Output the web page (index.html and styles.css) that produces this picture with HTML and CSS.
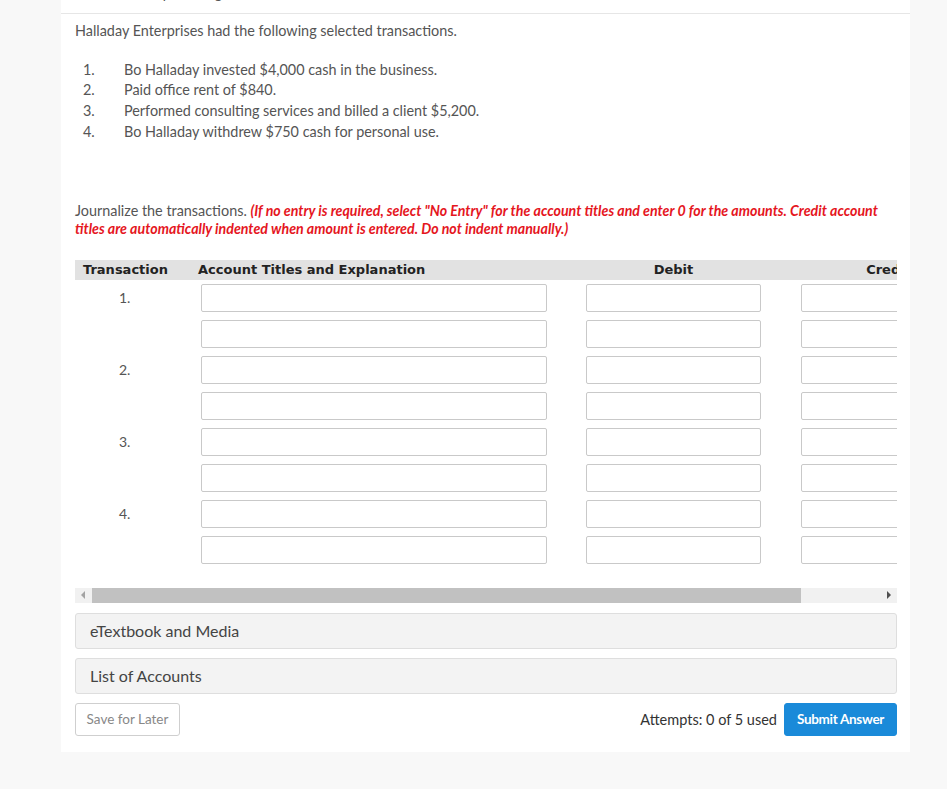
FILE: index.html
```html
<!DOCTYPE html>
<html lang="en">
<head>
<meta charset="utf-8">
<title>Journalize the transactions</title>
<link rel="stylesheet" href="styles.css">
</head>
<body>
<div class="page">
  <div class="card">
    <div class="card-head">Current Attempt in Progress</div>
    <div class="card-body">
      <p class="intro">Halladay Enterprises had the following selected transactions.</p>
      <ol class="txn-list">
        <li><span class="txn-num">1.</span><span>Bo Halladay invested $4,000 cash in the business.</span></li>
        <li><span class="txn-num">2.</span><span>Paid office rent of $840.</span></li>
        <li><span class="txn-num">3.</span><span>Performed consulting services and billed a client $5,200.</span></li>
        <li><span class="txn-num">4.</span><span>Bo Halladay withdrew $750 cash for personal use.</span></li>
      </ol>
      <p class="instructions">Journalize the transactions. <em class="warn">(If no entry is required, select "No Entry" for the account titles and enter 0 for the amounts. Credit account titles are automatically indented when amount is entered. Do not indent manually.)</em></p>

      <div class="journal">
        <div class="journal-scroll">
          <div class="jhead">
            <div class="jh jh-txn">Transaction</div>
            <div class="jh jh-acct">Account Titles and Explanation</div>
            <div class="jh jh-amt">Debit</div>
            <div class="jh jh-amt">Credit</div>
          </div>
          <div class="jrows">
            <div class="jrow"><div class="jnum">1.</div><input class="field field-acct" type="text"><input class="field field-amt" type="text"><input class="field field-amt" type="text"></div>
            <div class="jrow"><div class="jnum"></div><input class="field field-acct" type="text"><input class="field field-amt" type="text"><input class="field field-amt" type="text"></div>
            <div class="jrow"><div class="jnum">2.</div><input class="field field-acct" type="text"><input class="field field-amt" type="text"><input class="field field-amt" type="text"></div>
            <div class="jrow"><div class="jnum"></div><input class="field field-acct" type="text"><input class="field field-amt" type="text"><input class="field field-amt" type="text"></div>
            <div class="jrow"><div class="jnum">3.</div><input class="field field-acct" type="text"><input class="field field-amt" type="text"><input class="field field-amt" type="text"></div>
            <div class="jrow"><div class="jnum"></div><input class="field field-acct" type="text"><input class="field field-amt" type="text"><input class="field field-amt" type="text"></div>
            <div class="jrow"><div class="jnum">4.</div><input class="field field-acct" type="text"><input class="field field-amt" type="text"><input class="field field-amt" type="text"></div>
            <div class="jrow"><div class="jnum"></div><input class="field field-acct" type="text"><input class="field field-amt" type="text"><input class="field field-amt" type="text"></div>
          </div>
        </div>
        <div class="hscroll">
          <div class="hs-btn"><span class="tri tri-left"></span></div>
          <div class="hs-thumb"></div>
          <div class="hs-track"></div>
          <div class="hs-btn"><span class="tri tri-right"></span></div>
        </div>
      </div>

      <div class="panel">eTextbook and Media</div>
      <div class="panel">List of Accounts</div>

      <div class="actions">
        <button class="btn btn-save" type="button">Save for Later</button>
        <div class="actions-right">
          <span class="attempts">Attempts: 0 of 5 used</span>
          <button class="btn btn-submit" type="button">Submit Answer</button>
        </div>
      </div>
    </div>
  </div>
</div>
</body>
</html>
```

FILE: styles.css
```css
* { box-sizing: border-box; }

body {
  margin: 0;
  background: #f8f8f8;
  font-family: Lato, "Liberation Sans", sans-serif;
  color: #555;
}

.page {
  display: flex;
  padding: 0 37px 0 61px;
}

.card {
  flex: 1;
  min-width: 0;
  background: #fff;
  margin-top: -15px;
  padding-bottom: 16px;
}

.card-head {
  font-size: 14px;
  line-height: 17px;
  padding: 0 14px 11px;
  border-bottom: 1px solid #e6e6e6;
  color: #555;
}

.card-body {
  padding: 8px 13px 0 14px;
}

.intro {
  margin: 0;
  font-size: 14.4px;
  line-height: 18px;
}

.txn-list {
  list-style: none;
  margin: 19.5px 0 0;
  padding: 0;
  font-size: 14.4px;
  line-height: 20.7px;
}

.txn-list li {
  display: flex;
}

.txn-num {
  width: 49px;
  padding-left: 8px;
  flex: none;
}

.instructions {
  margin: 59.5px 0 0;
  font-size: 14.4px;
  line-height: 18px;
}

.warn {
  color: #e5161e;
  font-weight: 700;
  font-style: italic;
  font-size: 14.2px;
}

.journal {
  margin-top: 22px;
}

.journal-scroll {
  overflow: hidden;
  padding-bottom: 24px;
}

.jhead,
.jrow {
  display: grid;
  grid-template-columns: 126px 385px 215px 215px;
  width: 941px;
}

.jhead {
  height: 20px;
  background: #e2e2e2;
  align-items: center;
  font-family: "DejaVu Sans", Verdana, sans-serif;
  font-weight: 700;
  font-size: 13px;
  color: #222;
}

.jh-txn { padding-left: 8px; }
.jh-acct { margin-left: -3px; }
.jh-amt { width: 175px; text-align: center; }

.jrows {
  display: flex;
  flex-direction: column;
  gap: 8px;
  padding-top: 4px;
}

.jrow {
  height: 28px;
  align-items: center;
}

.jnum {
  padding-left: 44px;
  font-size: 14px;
  color: #555;
}

.field {
  height: 28px;
  border: 1px solid #c9c9c9;
  border-radius: 2px;
  background: #fff;
  margin: 0;
  padding: 0 6px;
  font: inherit;
}

.field-acct { width: 346px; }
.field-amt { width: 175px; }

.hscroll {
  display: flex;
  height: 15px;
  background: #f1f1f1;
}

.hs-btn {
  width: 16px;
  flex: none;
  display: flex;
  align-items: center;
  justify-content: center;
}

.hs-thumb {
  width: 709px;
  margin-left: 1px;
  background: #c1c1c1;
}

.hs-track { flex: 1; }

.tri {
  width: 0;
  height: 0;
  border-top: 4px solid transparent;
  border-bottom: 4px solid transparent;
}

.tri-left { border-right: 4px solid #a3a3a3; }
.tri-right { border-left: 4px solid #505050; }

.panel {
  margin-top: 10px;
  height: 36px;
  display: flex;
  align-items: center;
  padding-left: 14px;
  padding-bottom: 1px;
  background: #f3f3f3;
  border: 1px solid #dedede;
  border-radius: 3px;
  font-size: 16px;
  color: #444;
}

.panel + .panel { margin-top: 9px; }

.actions {
  margin-top: 9px;
  display: flex;
  align-items: center;
  justify-content: space-between;
}

.actions-right {
  display: flex;
  align-items: center;
  gap: 7px;
}

.btn {
  height: 33px;
  border-radius: 3px;
  font-family: Lato, "Liberation Sans", sans-serif;
  font-size: 13.5px;
  cursor: pointer;
}

.btn-save {
  width: 105px;
  padding: 0;
  background: #fff;
  border: 1px solid #cfcfcf;
  color: #888;
}

.attempts {
  font-size: 14.5px;
  color: #333;
}

.btn-submit {
  width: 113px;
  padding: 0;
  background: #1a8ad9;
  border: 1px solid #1a8ad9;
  color: #fff;
  font-weight: 700;
  letter-spacing: -0.3px;
}
```
